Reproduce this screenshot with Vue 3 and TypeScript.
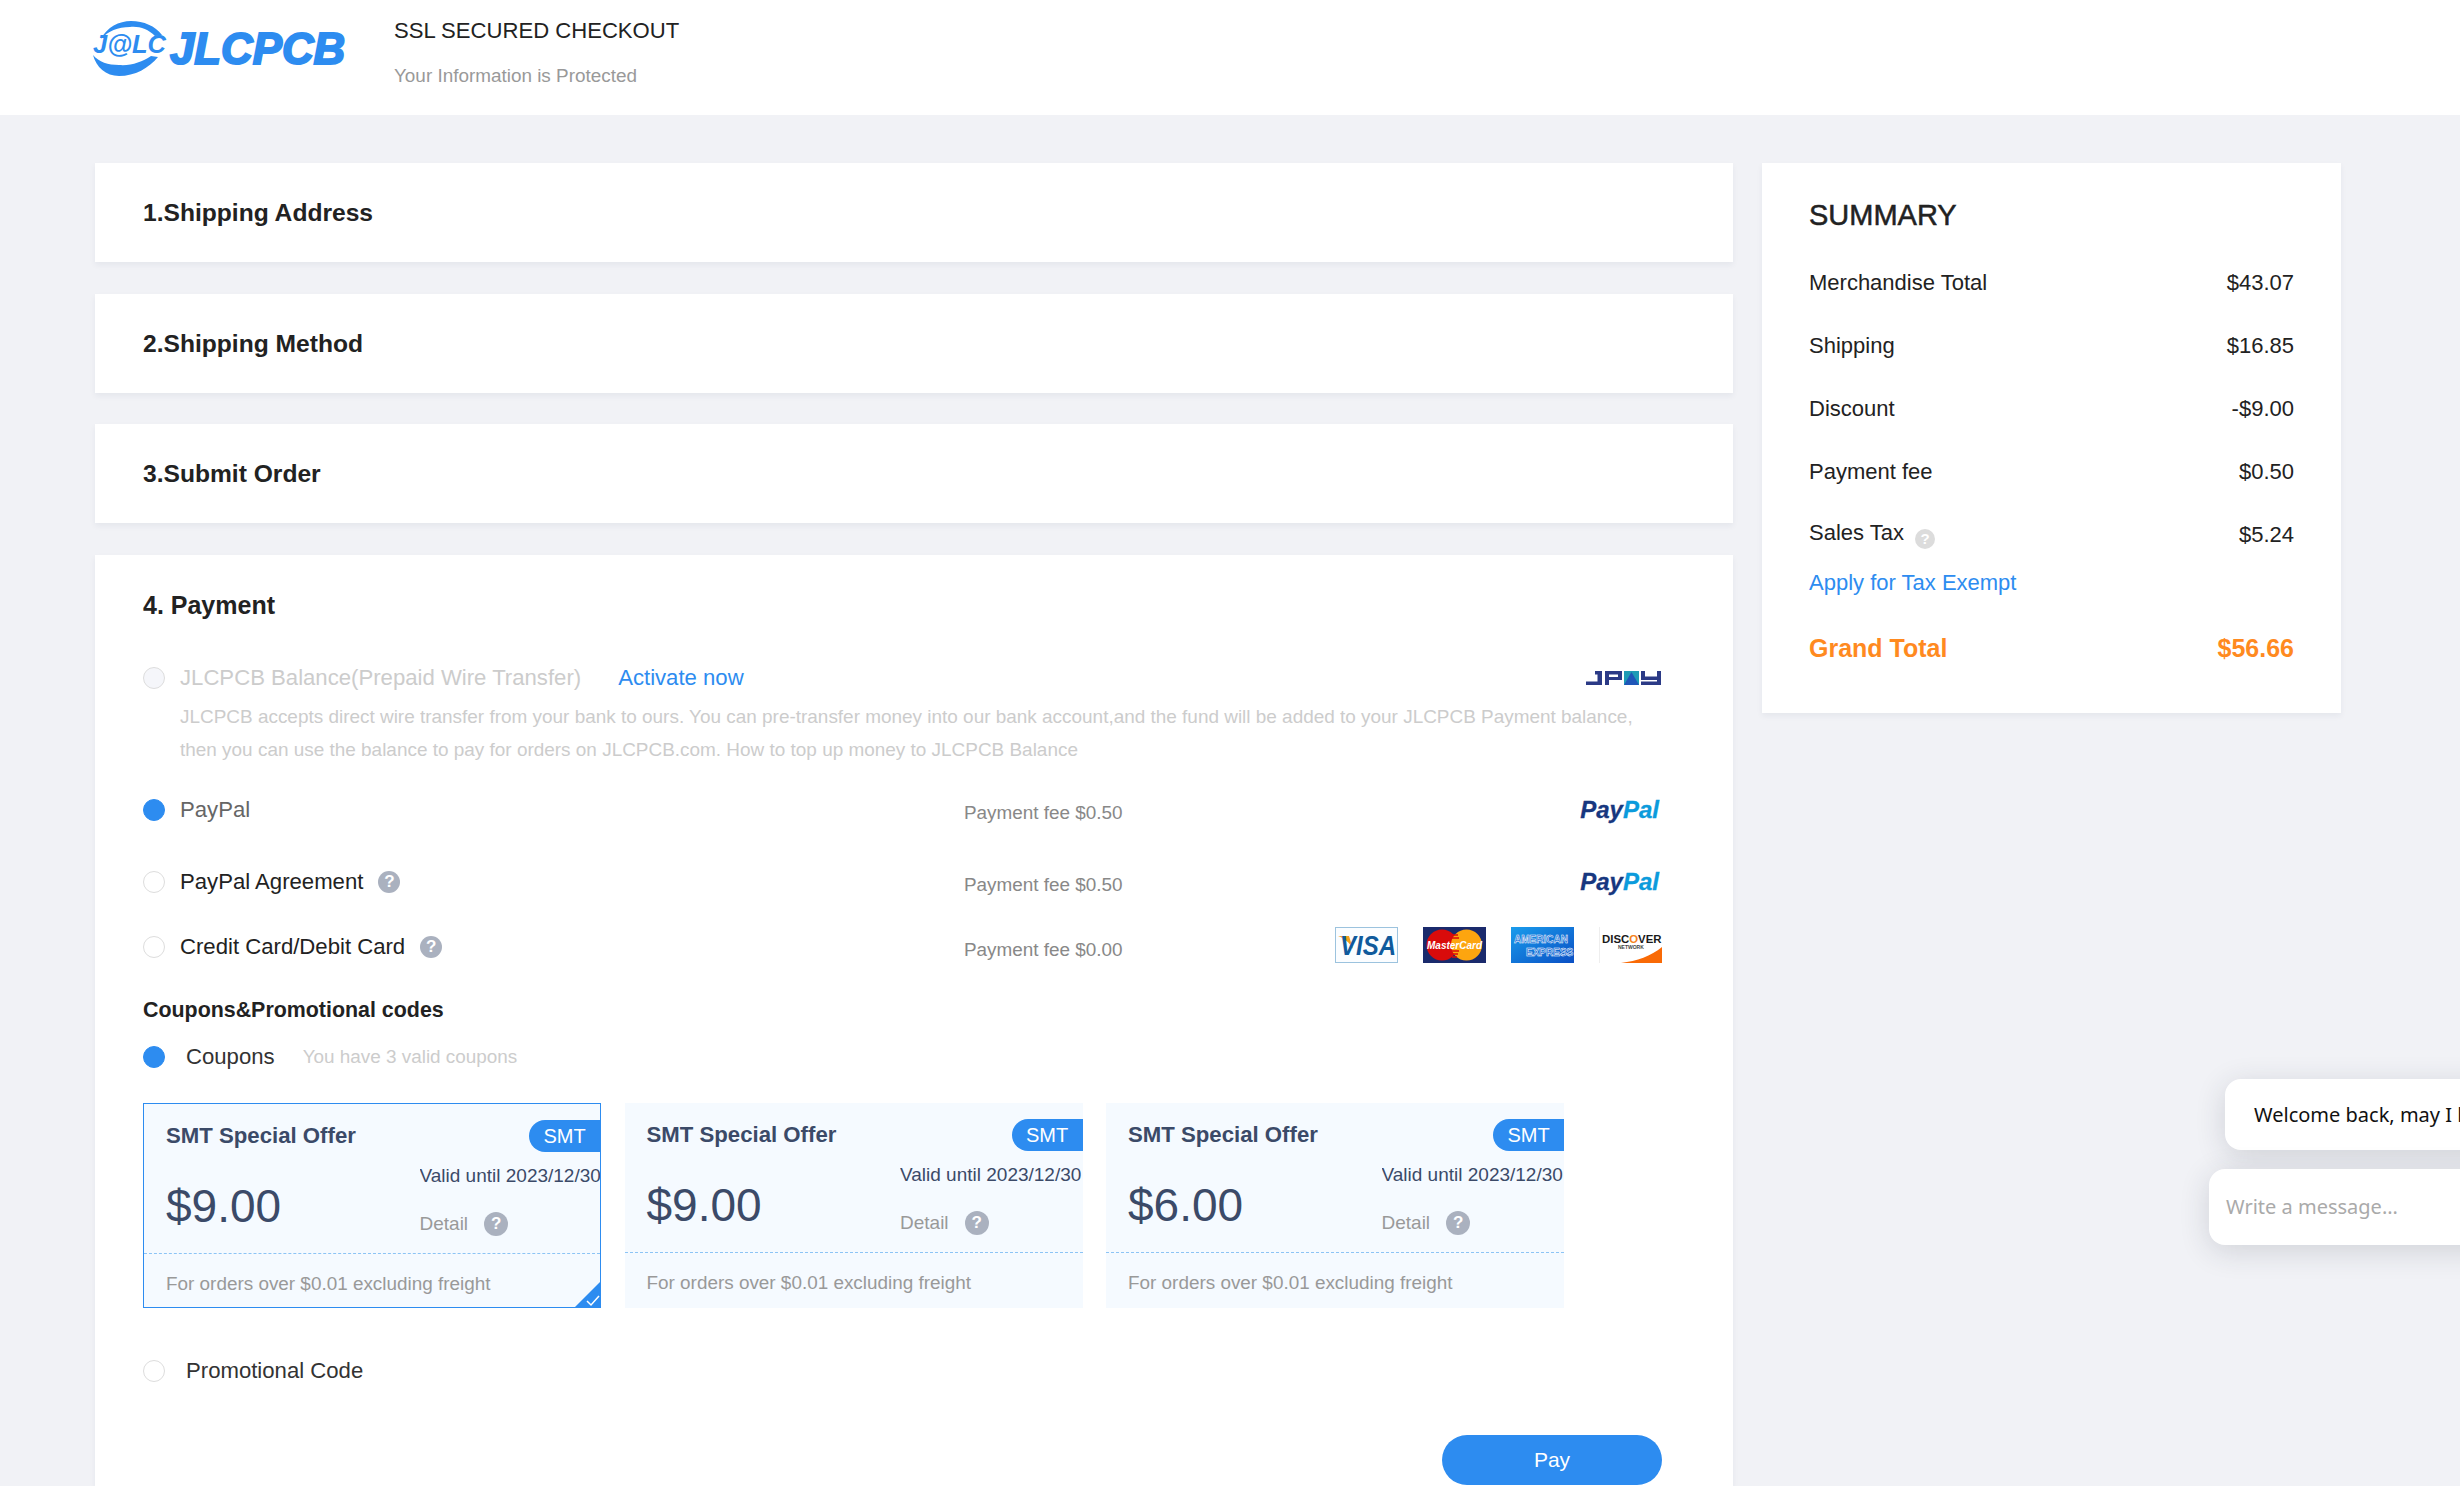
<script setup lang="ts">
interface PayOption {
  name: string;
  fee: string;
  help: boolean;
  checked: boolean;
  logo: "paypal" | "cards";
}

interface Coupon {
  amount: string;
  selected: boolean;
}

interface SummaryRow {
  label: string;
  value: string;
  help?: boolean;
}

const steps = ["1.Shipping Address", "2.Shipping Method", "3.Submit Order"];

const payOptions: PayOption[] = [
  { name: "PayPal", fee: "Payment fee $0.50", help: false, checked: true, logo: "paypal" },
  { name: "PayPal Agreement", fee: "Payment fee $0.50", help: true, checked: false, logo: "paypal" },
  { name: "Credit Card/Debit Card", fee: "Payment fee $0.00", help: true, checked: false, logo: "cards" },
];

const coupons: Coupon[] = [
  { amount: "$9.00", selected: true },
  { amount: "$9.00", selected: false },
  { amount: "$6.00", selected: false },
];

const summaryRows: SummaryRow[] = [
  { label: "Merchandise Total", value: "$43.07" },
  { label: "Shipping", value: "$16.85" },
  { label: "Discount", value: "-$9.00" },
  { label: "Payment fee", value: "$0.50" },
  { label: "Sales Tax", value: "$5.24", help: true },
];
</script>

<template>
  <div class="page">
    <header class="topbar">
      <svg class="logo" width="260" height="60" viewBox="0 0 260 60">
        <path d="M9 20C15 8 27 2 39 2C52 2 63 7 70 16L63 17C56 10 47 7 38 8C26 8 16 12 9 20Z" fill="#2d8cf0" />
        <path d="M1 36C4 48 14 57 27 57C43 57 57 49 66 38L59 37C50 43 39 47 27 46C16 46 7 43 1 36Z" fill="#2d8cf0" />
        <text x="1" y="34" class="logo-small">J@LC</text>
        <text x="78" y="45" class="logo-big">JLCPCB</text>
      </svg>
      <div class="secure">
        <div class="secure-title">SSL SECURED CHECKOUT</div>
        <div class="secure-sub">Your Information is Protected</div>
      </div>
    </header>

    <main class="content">
      <div class="left">
        <section v-for="step in steps" :key="step" class="card step">{{ step }}</section>

        <section class="card payment">
          <h2 class="pay-title">4. Payment</h2>

          <div class="pay-row balance">
            <div class="pay-label">
              <span class="radio disabled"></span>
              <span class="muted-label">JLCPCB Balance(Prepaid Wire Transfer)</span>
              <a class="activate">Activate now</a>
            </div>
            <span></span>
            <svg width="76" height="14" viewBox="0 0 76 14">
              <path d="M9 0H16V14H0V10.500H11.500V3.500H9Z" fill="#2b3a86" />
              <path fill-rule="evenodd" d="M19 0H36V9H23V14H19ZM23 3.500V6H32V3.500Z" fill="#2b3a86" />
              <path d="M38 0H53V14H38Z" fill="#1e9bb5" />
              <path d="M45.500 1L53 14H38Z" fill="#1f56b8" />
              <path d="M55 0H59V5.500H71V0H75V14H55V10.500H71V9H55Z" fill="#2b3a86" />
            </svg>
          </div>
          <p class="balance-desc">
            JLCPCB accepts direct wire transfer from your bank to ours. You can pre-transfer money into our bank account,and the fund will be added to your JLCPCB Payment balance,
            then you can use the balance to pay for orders on JLCPCB.com. How to top up money to JLCPCB Balance
          </p>

          <div v-for="opt in payOptions" :key="opt.name" class="pay-row option" :class="{ 'has-cards': opt.logo === 'cards' }">
            <div class="pay-label">
              <span class="radio" :class="{ checked: opt.checked }"></span>
              <span :class="opt.checked ? 'grey-label' : 'dark-label'">{{ opt.name }}</span>
              <span v-if="opt.help" class="help">?</span>
            </div>
            <span class="fee">{{ opt.fee }}</span>
            <span v-if="opt.logo === 'paypal'" class="paypal"><span class="pp-dark">Pay</span><span class="pp-light">Pal</span></span>
            <div v-else class="brands">
              <svg width="63" height="36" viewBox="0 0 63 36">
                <rect x="0.500" y="0.500" width="62" height="35" fill="#fbfdff" stroke="#9cc3de" />
                <path d="M3 9H14L18 22C14 15 9 11 3 9Z" fill="#f5a11d" />
                <text x="5" y="24.500" class="visa" transform="scale(1 1.15)">VISA</text>
              </svg>
              <svg width="63" height="36" viewBox="0 0 63 36">
                <rect width="63" height="36" fill="#1a2a6c" />
                <circle cx="19" cy="18" r="15.500" fill="#d90b0b" />
                <circle cx="43.500" cy="18" r="15.500" fill="#fda50f" />
                <path d="M28 8H35M27 11H36M27 24H36M28 27H35M29 30H34" stroke="#d90b0b" stroke-width="1.300" />
                <text x="4" y="22" class="mc">MasterCard</text>
              </svg>
              <svg width="63" height="36" viewBox="0 0 63 36">
                <defs>
                  <linearGradient id="amexBg" x1="0" y1="0" x2="1" y2="1">
                    <stop offset="0" stop-color="#1a9cec" />
                    <stop offset="1" stop-color="#0a4fc4" />
                  </linearGradient>
                </defs>
                <rect width="63" height="36" fill="url(#amexBg)" />
                <text x="3" y="16" class="amex">AMERICAN</text>
                <text x="15" y="29" class="amex">EXPRESS</text>
              </svg>
              <svg width="63" height="36" viewBox="0 0 63 36">
                <rect width="63" height="36" fill="#fff" />
                <path d="M0.500 0V36" stroke="#eee" />
                <path d="M22 36C38 34 52 29 63 20V36Z" fill="#f96a06" />
                <text x="3" y="16" class="discover">DISC<tspan fill="#f58220">O</tspan>VER</text>
                <text x="19" y="22" class="network">NETWORK</text>
              </svg>
            </div>
          </div>

          <h3 class="promo-title">Coupons&amp;Promotional codes</h3>
          <div class="coupon-choice">
            <span class="radio checked"></span>
            <span class="choice-name">Coupons</span>
            <span class="choice-note">You have 3 valid coupons</span>
          </div>

          <div class="coupons">
            <div v-for="(c, i) in coupons" :key="i" class="coupon" :class="{ selected: c.selected }">
              <div class="coupon-main">
                <div class="coupon-name">SMT Special Offer</div>
                <span class="tag">SMT</span>
                <div class="amount">{{ c.amount }}</div>
                <div class="coupon-meta">
                  <div class="valid">Valid until 2023/12/30</div>
                  <div class="detail">Detail <span class="help small">?</span></div>
                </div>
              </div>
              <div class="coupon-foot">For orders over $0.01 excluding freight</div>
              <svg v-if="c.selected" class="corner" width="27" height="27" viewBox="0 0 27 27">
                <path d="M27 0V27H0Z" fill="#2d8cf0" />
                <path d="M13 20L17 24L25 15" fill="none" stroke="#fff" stroke-width="1.500" />
              </svg>
            </div>
          </div>

          <div class="coupon-choice promo">
            <span class="radio"></span>
            <span class="choice-name">Promotional Code</span>
          </div>

          <div class="pay-action">
            <button class="pay-btn">Pay</button>
          </div>
        </section>
      </div>

      <aside class="card summary">
        <h2 class="summary-title">SUMMARY</h2>
        <div v-for="row in summaryRows" :key="row.label" class="sum-row">
          <span>{{ row.label }}<span v-if="row.help" class="help tax">?</span></span>
          <span>{{ row.value }}</span>
        </div>
        <a class="exempt">Apply for Tax Exempt</a>
        <div class="sum-row grand">
          <span>Grand Total</span>
          <span>$56.66</span>
        </div>
      </aside>
    </main>

    <div class="chat">
      <div class="chat-bubble">Welcome back, may I help you?</div>
      <div class="chat-input">Write a message...</div>
    </div>
  </div>
</template>

<style>
html,
body {
  margin: 0;
  overflow: hidden;
  background: #f1f2f6;
}
</style>

<style scoped>
.page {
  position: relative;
  width: 2460px;
  height: 1486px;
  overflow: hidden;
  background: #f1f2f6;
  font-family: "Liberation Sans", Arial, sans-serif;
  color: #222;
}

.topbar {
  display: flex;
  height: 115px;
  padding: 19px 0 0 92px;
  box-sizing: border-box;
  background: #fff;
}

.logo {
  margin-right: 42px;
  flex: none;
}

.logo-small {
  font: italic bold 25.5px "Liberation Sans", sans-serif;
  fill: #2d8cf0;
}

.logo-big {
  font: italic bold 43.8px "Liberation Sans", sans-serif;
  fill: #2d8cf0;
  stroke: #2d8cf0;
  stroke-width: 2px;
}

.secure-title {
  font-size: 22.1px;
  line-height: 24px;
}

.secure-sub {
  margin-top: 22px;
  font-size: 18.9px;
  line-height: 22px;
  color: #999;
}

.content {
  display: flex;
  gap: 29px;
  padding: 48px 0 0 95px;
}

.left {
  display: flex;
  flex-direction: column;
  gap: 31.6px;
  width: 1638px;
  flex: none;
}

.card {
  background: #fff;
  box-shadow: 0 3px 6px rgba(40, 50, 80, 0.06);
}

.step {
  height: 99px;
  padding-left: 48px;
  line-height: 99px;
  font-size: 24.6px;
  font-weight: bold;
}

.payment {
  padding: 34px 71px 0 48px;
  height: 931px;
  box-sizing: border-box;
}

.pay-title {
  margin: 0;
  font-size: 25px;
  line-height: 32px;
  font-weight: bold;
}

.pay-row {
  display: grid;
  grid-template-columns: 821px 1fr auto;
  align-items: center;
  height: 36px;
}

.balance {
  margin-top: 39px;
}

.pay-label {
  display: flex;
  align-items: center;
  font-size: 22.15px;
}

.radio {
  width: 22px;
  height: 22px;
  border: 1px solid #ddd;
  border-radius: 50%;
  box-sizing: border-box;
  background: #fff;
  flex: none;
}

.radio.disabled {
  background: #f5f6fa;
}

.radio.checked {
  background: #2d8cf0;
  border-color: #2d8cf0;
}

.pay-label .radio {
  margin-right: 15px;
}

.muted-label {
  color: #ccc;
}

.grey-label {
  color: #666;
}

.dark-label {
  color: #222;
}

.activate {
  margin-left: 37px;
  color: #2d8cf0;
}

.balance-desc {
  margin: 4px 0 0 37px;
  width: 1470px;
  font-size: 18.96px;
  line-height: 33px;
  color: #ccc;
}

.option {
  margin-top: 36px;
}

.balance-desc + .option {
  margin-top: 26px;
}

.has-cards {
  margin-top: 29px;
}

.help {
  display: inline-block;
  width: 22px;
  height: 22px;
  margin-left: 15px;
  border-radius: 50%;
  background: #aab1bf;
  color: #fff;
  font-size: 17px;
  font-weight: bold;
  line-height: 22px;
  text-align: center;
}

.help.small {
  width: 24px;
  height: 24px;
  line-height: 24px;
  margin-left: 16px;
}

.help.tax {
  width: 20px;
  height: 20px;
  margin-left: 11px;
  font-size: 15px;
  line-height: 20px;
  background: #dcdcdc;
  vertical-align: -4px;
}

.fee {
  font-size: 18.9px;
  color: #888;
  padding-top: 7px;
}

.paypal {
  margin-right: 3px;
  font: italic bold 24px "Liberation Sans", sans-serif;
  -webkit-text-stroke: 0.3px currentColor;
}

.pp-dark {
  color: #17377f;
}

.pp-light {
  color: #0b9bdc;
}

.brands {
  display: flex;
  gap: 25px;
  margin-top: -4px;
}

.visa {
  font: italic bold 24px "Liberation Sans", sans-serif;
  fill: #0f5a9c;
}

.mc {
  font: italic bold 10px "Liberation Sans", sans-serif;
  fill: #fff;
}

.amex {
  font: bold 10px "Liberation Sans", sans-serif;
  fill: #1266d4;
  stroke: #fff;
  stroke-width: 0.5px;
}

.discover {
  font: bold 11.4px "Liberation Sans", sans-serif;
  fill: #1a1a1a;
}

.network {
  font: bold 5px "Liberation Sans", sans-serif;
  fill: #444;
}

.promo-title {
  margin: 27px 0 0;
  font-size: 21.4px;
  line-height: 36px;
  font-weight: bold;
}

.coupon-choice {
  display: flex;
  align-items: center;
  height: 36px;
  margin-top: 11px;
}

.choice-name {
  margin-left: 21px;
  font-size: 22.15px;
  color: #333;
}

.choice-note {
  margin-left: 28px;
  font-size: 18.9px;
  color: #ccc;
}

.coupons {
  display: flex;
  gap: 23.5px;
  margin-top: 28.5px;
}

.coupon {
  position: relative;
  width: 458px;
  height: 205px;
  box-sizing: border-box;
  background: #f5faff;
  color: #3b4a68;
}

.coupon.selected {
  border: 1px solid #2d8cf0;
}

.coupon-main {
  display: grid;
  grid-template-columns: 253.5px 1fr;
  grid-template-rows: 44px 1fr;
  height: 150px;
  padding: 16px 0 0 22px;
  box-sizing: border-box;
  border-bottom: 1px dashed #8cc4f5;
}

.coupon-name {
  font-size: 22.2px;
  font-weight: bold;
  line-height: 32px;
}

.tag {
  justify-self: end;
  width: 71px;
  height: 32px;
  line-height: 32px;
  border-radius: 16px 0 0 16px;
  background: #2d8cf0;
  color: #fff;
  font-size: 20px;
  text-align: center;
}

.amount {
  font-size: 46px;
  line-height: 60px;
  margin-top: 12px;
}

.coupon-meta {
  white-space: nowrap;
  overflow: hidden;
}

.valid {
  font-size: 19px;
  line-height: 24px;
}

.detail {
  display: flex;
  align-items: center;
  margin-top: 24px;
  font-size: 19px;
  color: #999;
}

.coupon-foot {
  padding: 19px 0 0 22px;
  font-size: 18.9px;
  line-height: 22px;
  color: #999;
}

.corner {
  position: absolute;
  right: -1px;
  bottom: -1px;
}

.promo {
  margin-top: 45px;
}

.pay-action {
  display: flex;
  justify-content: flex-end;
  margin-top: 46px;
}

.pay-btn {
  width: 220px;
  height: 50px;
  border: 0;
  border-radius: 25px;
  background: #2d8cf0;
  color: #fff;
  font: 21px "Liberation Sans", sans-serif;
}

.summary {
  width: 579px;
  height: 550px;
  padding: 0 47px;
  box-sizing: border-box;
  flex: none;
}

.summary-title {
  margin: 0;
  padding-top: 33px;
  font-size: 29px;
  line-height: 38px;
  font-weight: normal;
  -webkit-text-stroke: 0.5px #222;
}

.sum-row {
  display: flex;
  justify-content: space-between;
  align-items: center;
  height: 63px;
  font-size: 22px;
}

.summary-title + .sum-row {
  margin-top: 17px;
}

.exempt {
  display: block;
  margin-top: 1px;
  font-size: 22px;
  line-height: 32px;
  color: #2d8cf0;
}

.grand {
  margin-top: 18px;
  font-size: 25px;
  font-weight: bold;
  color: #ff8a1f;
}

.chat {
  position: absolute;
  left: 2209px;
  top: 1079px;
  width: 420px;
}

.chat-bubble {
  margin-left: 16px;
  height: 71px;
  padding-left: 29px;
  background: #fff;
  border-radius: 16px;
  font: 20px/71px "Noto Sans", sans-serif;
  color: #111;
  white-space: nowrap;
  box-shadow: 0 6px 30px rgba(40, 45, 60, 0.16);
}

.chat-input {
  margin-top: 19px;
  height: 76px;
  padding-left: 17px;
  background: #fff;
  border-radius: 16px;
  font: 20px/76px "Noto Sans", sans-serif;
  color: #aaa;
  box-shadow: 0 6px 30px rgba(40, 45, 60, 0.16);
}
</style>
